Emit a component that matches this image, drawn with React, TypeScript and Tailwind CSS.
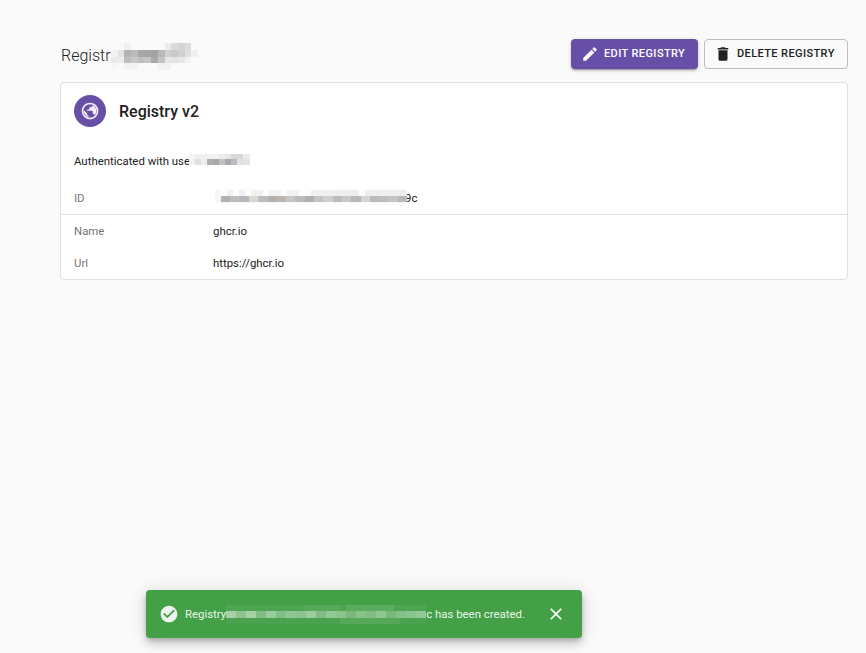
const font = { fontFamily: "Roboto, sans-serif" };

type Cell = [number, number, number, number, string];

// pixelated areas of the screenshot
function Mosaic({ width, height, vw, vh, cells, className }: { width: number; height: number; vw?: number; vh?: number; cells: Cell[]; className?: string }) {
  return (
    <svg width={width} height={height} viewBox={`0 0 ${vw || width} ${vh || height}`} className={className} shapeRendering="crispEdges">
      {cells.map((c, i) => (
        <rect key={i} x={c[0]} y={c[1]} width={c[2]} height={c[3]} fill={c[4]} />
      ))}
    </svg>
  );
}

const titleCells: Cell[] = [
  [12, 0, 6, 6, "#f0f0f0"], [48, 0, 6, 6, "#ececec"], [54, 0, 6, 6, "#dddbd9"], [60, 0, 6, 6, "#d5d4d3"], [66, 0, 6, 6, "#dcdcdc"],
  [0, 6, 6, 6, "#f2f2f2"], [6, 6, 6, 6, "#e4e4e4"], [12, 6, 6, 6, "#b8b2ad"], [18, 6, 6, 6, "#b9bcc0"], [24, 6, 6, 6, "#a9a7a7"], [30, 6, 6, 6, "#a6a5a6"], [36, 6, 6, 6, "#a2a2a3"], [42, 6, 6, 6, "#b8b8b8"], [48, 6, 6, 6, "#cfd0cf"], [54, 6, 6, 6, "#c9c9c9"], [60, 6, 6, 6, "#cfd2d4"], [66, 6, 6, 6, "#dddfe0"], [72, 6, 6, 6, "#eef0f1"],
  [0, 12, 6, 6, "#e9e9e9"], [6, 12, 6, 6, "#ececec"], [12, 12, 6, 6, "#c1bcb8"], [18, 12, 6, 6, "#c9c8c7"], [24, 12, 6, 6, "#bfc0c0"], [30, 12, 6, 6, "#c4c5c6"], [36, 12, 6, 6, "#a9a9a9"], [42, 12, 6, 6, "#c4c4c4"], [48, 12, 6, 6, "#e6e8e8"], [54, 12, 6, 6, "#e2e3e4"], [60, 12, 6, 6, "#e6e7e8"], [66, 12, 6, 6, "#f1f1f1"],
  [0, 18, 6, 6, "#f7f7f7"], [12, 18, 12, 6, "#f3f3f3"], [42, 18, 12, 6, "#f2f2f2"],
];

const userCells: Cell[] = [
  [0, 0, 6, 5, "#f5f5f5"], [6, 0, 12, 5, "#efefef"], [18, 0, 12, 5, "#f2f2f2"], [30, 0, 6, 5, "#eeeeee"], [36, 0, 6, 5, "#e6e6e6"], [42, 0, 12, 5, "#d8d8d8"], [54, 0, 7, 5, "#ebebeb"],
  [0, 5, 6, 6, "#f1f1f1"], [6, 5, 6, 6, "#e2dfe0"], [12, 5, 6, 6, "#f0f0f0"], [18, 5, 6, 6, "#b0aeae"], [24, 5, 6, 6, "#aaa7a7"], [30, 5, 6, 6, "#c2c2c2"], [36, 5, 6, 6, "#a8a8a8"], [42, 5, 6, 6, "#b8bcc6"], [48, 5, 6, 6, "#dfe0e0"], [54, 5, 7, 6, "#e0e3e7"],
];

const idColors = ["#b5b0ad", "#bdbdbd", "#b4b8bc", "#d8d8d4", "#c0bcb9", "#b3b1b0", "#bcb5b0", "#c6c6c6", "#b8bcbe", "#b0b0b0", "#c4c4c0", "#cbd0d0", "#bdbdbd", "#c9c9c9", "#b5b8bc", "#d4d4d4", "#bbbbbb", "#c2bdb8", "#c4c4c4", "#b9b9b9"];
const idCells: Cell[] = [
  [0, 0, 192, 14, "#fdfdfd"],
  [0, 1, 6, 6, "#f6f6f6"], [12, 1, 6, 6, "#f1f1f1"], [24, 1, 6, 6, "#f0f0f0"], [36, 1, 12, 6, "#f1f1f1"], [54, 1, 12, 6, "#f3f3f3"], [72, 1, 12, 6, "#f2f2f2"], [96, 1, 24, 6, "#f0f0f0"], [120, 1, 24, 6, "#eeeeee"], [150, 1, 42, 6, "#eeeeee"],
  [0, 7, 6, 6, "#f6f6f6"],
  ...idColors.map((c, i): Cell => [6 + i * 9.3, 7, 9.3, 6, c]),
  [0, 13, 192, 1, "#f7f7f7"],
];

const snackColors = ["#a6d1a8", "#8cc48f", "#a6d1a8", "#7fbd82", "#9accA0", "#82bf85", "#90c693", "#8cc48f", "#9ccb9f", "#7fbd82", "#93c796", "#8cc48f", "#78b97b", "#88c28b", "#7fbd82", "#90c693", "#78b97b", "#84c087", "#8cc48f", "#93c796"];
const snackCells: Cell[] = [
  [0, 0, 200, 19, "#43a047"], [0, 0, 200, 6, "#4ea551"], [78, 0, 36, 6, "#55a958"], [120, 0, 48, 6, "#5bac5e"],
  ...snackColors.map((c, i): Cell => [i * 10, 6, 10, 7, c]),
  [0, 13, 200, 6, "#4aa24e"], [114, 13, 60, 6, "#55a958"],
];

function Row({ label, value, children }: { label: string; value?: string; children?: React.ReactNode }) {
  return (
    <div className="flex items-center h-8 pt-[2px] px-[13px] text-[11.4px]">
      <div className="w-[139px] text-[#757575]">{label}</div>
      <div className="flex items-center text-[#212121]">{value}{children}</div>
    </div>
  );
}

export default function App() {
  return (
    <div style={font} className="relative min-h-[653px] bg-[#fafafa] overflow-hidden">
      <div className="ml-[60px] mr-[18px] pt-[39px]">
        <div className="flex items-center justify-between h-[30px]">
          <div className="flex items-center pl-[1px] pt-[3px] text-[16px] font-light text-[#212121] h-full">
            Registr
            <Mosaic width={87} height={27} vw={78} vh={24} cells={titleCells} className="mt-[2px]" />
          </div>
          <div className="flex gap-[6px]">
            <button className="flex items-center h-[30px] w-[127px] pl-[10px] rounded bg-[#674ea7] text-white text-[11px] font-medium tracking-[0.4px] shadow-[0_3px_1px_-2px_rgba(0,0,0,0.2),0_2px_2px_0_rgba(0,0,0,0.14),0_1px_5px_0_rgba(0,0,0,0.12)]">
              <svg width="18" height="18" viewBox="0 0 24 24" fill="currentColor" className="mr-[5px]">
                <path d="M3 17.25V21h3.75L17.81 9.94l-3.75-3.75L3 17.25zM20.71 7.04a.996.996 0 0 0 0-1.41l-2.34-2.34a.996.996 0 0 0-1.41 0l-1.83 1.83 3.75 3.75 1.83-1.83z" />
              </svg>
              <span className="mt-[1px]">EDIT REGISTRY</span>
            </button>
            <button className="flex items-center h-[30px] w-[144px] pl-[9px] rounded border border-[#bdbdbd] text-[#212121] text-[11px] font-medium tracking-[0.4px]">
              <svg width="18" height="18" viewBox="0 0 24 24" fill="currentColor" className="mr-[5px]">
                <path d="M6 19c0 1.1.9 2 2 2h8c1.1 0 2-.9 2-2V7H6v12zM19 4h-3.5l-1-1h-5l-1 1H5v2h14V4z" />
              </svg>
              <span className="mt-[1px]">DELETE REGISTRY</span>
            </button>
          </div>
        </div>

        <div className="mt-[13px] h-[198px] bg-white border border-[#e0e0e0] rounded">
          <div className="flex items-center pl-[13px] mt-[12px] h-8">
            <div className="flex items-center justify-center w-8 h-8 rounded-full bg-[#674ea7] text-[#f1eef8]">
              <svg width="20" height="20" viewBox="0 0 24 24" fill="currentColor">
                <path d="M4 12c0-.61.08-1.21.21-1.78L8.99 15v1c0 1.1.9 2 2 2v1.93C7.06 19.43 4 16.07 4 12zm13.89 5.4c-.26-.81-1-1.4-1.9-1.4h-1v-3c0-.55-.45-1-1-1h-6v-2h2c.55 0 1-.45 1-1V7h2c1.1 0 2-.9 2-2v-.41C17.92 5.77 20 8.65 20 12c0 2.08-.81 3.98-2.11 5.4z" stroke="#674ea7" strokeWidth="0.7" />
                <circle cx="12" cy="12" r="9.1" fill="none" stroke="currentColor" strokeWidth="1.9" />
              </svg>
            </div>
            <div className="ml-[13px] mt-[2px] text-[16px] font-medium text-[#212121]">Registry v2</div>
          </div>
          <div className="flex items-center h-[18px] mt-[26px] pl-[13px] text-[11.4px] text-[#212121]">
            Authenticated with use
            <Mosaic width={62} height={16} vw={61} vh={16} cells={userCells} className="-ml-[2px]" />
          </div>
          <div className="mt-[11px]">
            <Row label="ID">
              <Mosaic width={202} height={14} vw={192} vh={14} cells={idCells} className="relative z-10 -mt-[6px] -ml-[3px]" />
              <span className="-ml-[7px]">9c</span>
            </Row>
          </div>
          <div className="h-px bg-[#e0e0e0]" />
          <Row label="Name" value="ghcr.io" />
          <Row label="Url" value="https://ghcr.io" />
        </div>
      </div>

      <div className="absolute left-[146px] top-[590px] flex items-center w-[436px] h-12 pl-[13px] rounded bg-[#43a047] text-white text-[11.4px] shadow-[0_3px_5px_-1px_rgba(0,0,0,0.2),0_6px_10px_0_rgba(0,0,0,0.14),0_1px_18px_0_rgba(0,0,0,0.12)]">
        <svg width="20" height="20" viewBox="0 0 24 24" fill="currentColor" className="opacity-90 mr-[6px] shrink-0">
          <path d="M12 2C6.48 2 2 6.48 2 12s4.48 10 10 10 10-4.48 10-10S17.52 2 12 2zm-2 15-5-5 1.41-1.41L10 14.17l7.59-7.59L19 8l-9 9z" />
        </svg>
        <span className="opacity-90 mt-[2px]">Registry</span>
        <Mosaic width={200} height={19} cells={snackCells} className="shrink-0" />
        <span className="opacity-90 mt-[2px]">c has been created.</span>
        <svg width="20" height="20" viewBox="0 0 24 24" fill="currentColor" className="ml-[21px] shrink-0">
          <path d="M19 6.41 17.59 5 12 10.59 6.41 5 5 6.41 10.59 12 5 17.59 6.41 19 12 13.41 17.59 19 19 17.59 13.41 12z" />
        </svg>
      </div>
    </div>
  );
}
